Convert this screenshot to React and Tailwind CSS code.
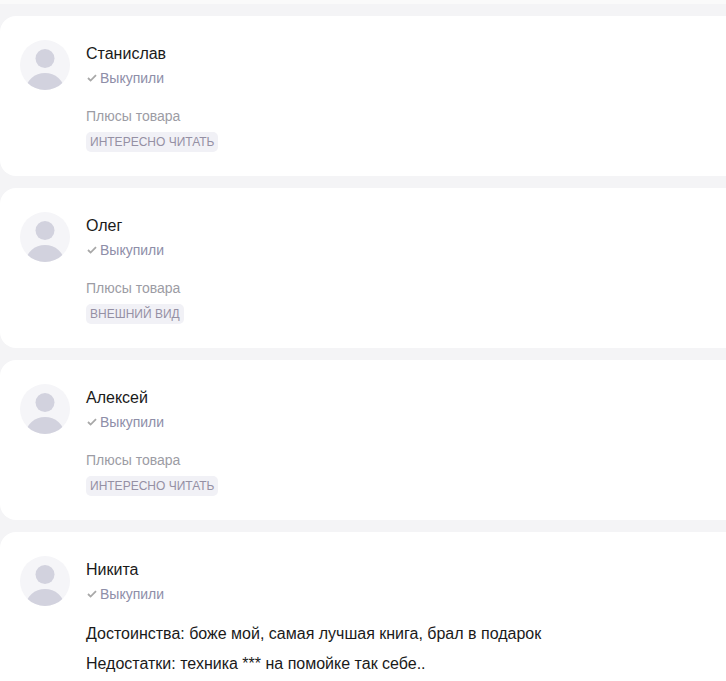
import React from 'react';

const reviews = [
  { name: 'Станислав', tag: 'ИНТЕРЕСНО ЧИТАТЬ' },
  { name: 'Олег', tag: 'ВНЕШНИЙ ВИД' },
  { name: 'Алексей', tag: 'ИНТЕРЕСНО ЧИТАТЬ' },
];

const Avatar = () => (
  <svg width="50" height="50" viewBox="0 0 50 50" className="shrink-0">
    <defs>
      <clipPath id="avatar-clip">
        <circle cx="25" cy="25" r="25" />
      </clipPath>
    </defs>
    <circle cx="25" cy="25" r="25" fill="#f5f5f8" />
    <g clipPath="url(#avatar-clip)" fill="#d2d2de">
      <circle cx="25" cy="18.5" r="9.5" />
      <ellipse cx="25" cy="50" rx="19" ry="17" />
    </g>
  </svg>
);

const Bought = () => (
  <div className="flex items-center h-5 text-sm text-[#8e8ea8]">
    <svg width="10" height="8" viewBox="0 0 10 8" fill="none" className="ml-[1px] mr-[3px]">
      <path d="M1 4l2.6 2.6L9 1.2" stroke="#a8a8a8" strokeWidth="1.8" />
    </svg>
    Выкупили
  </div>
);

const ReviewCard = ({ name, children }) => (
  <div className="flex bg-white rounded-l-2xl pt-6 pb-6 pl-5 gap-4">
    <Avatar />
    <div className="flex-1">
      <div className="text-base leading-[28px] text-[#1a1a1a]">{name}</div>
      <Bought />
      {children}
    </div>
  </div>
);

const App = () => {
  return (
    <div className="w-[726px] h-[681px] overflow-hidden bg-[#f4f4f6] font-['Liberation_Sans',Arial,sans-serif]">
      <div className="h-1 bg-[#fafafa]"></div>
      <div className="flex flex-col gap-3 pt-3">
        {reviews.map((review) => (
          <ReviewCard key={review.name} name={review.name}>
            <div className="mt-[18px] text-sm leading-5 text-[#9c9ca4]">Плюсы товара</div>
            <div className="mt-[6px] flex">
              <span className="h-5 px-1 rounded-[5px] bg-[#f1f1f6] text-xs leading-5 text-[#9590a4]">
                {review.tag}
              </span>
            </div>
          </ReviewCard>
        ))}
        <ReviewCard name="Никита">
          <div className="mt-[18px] text-base leading-6 text-[#1a1a1a]">
            Достоинства: боже мой, самая лучшая книга, брал в подарок
          </div>
          <div className="mt-[6px] text-base leading-6 text-[#1a1a1a]">
            Недостатки: техника *** на помойке так себе..
          </div>
        </ReviewCard>
      </div>
    </div>
  );
};

export default App;
